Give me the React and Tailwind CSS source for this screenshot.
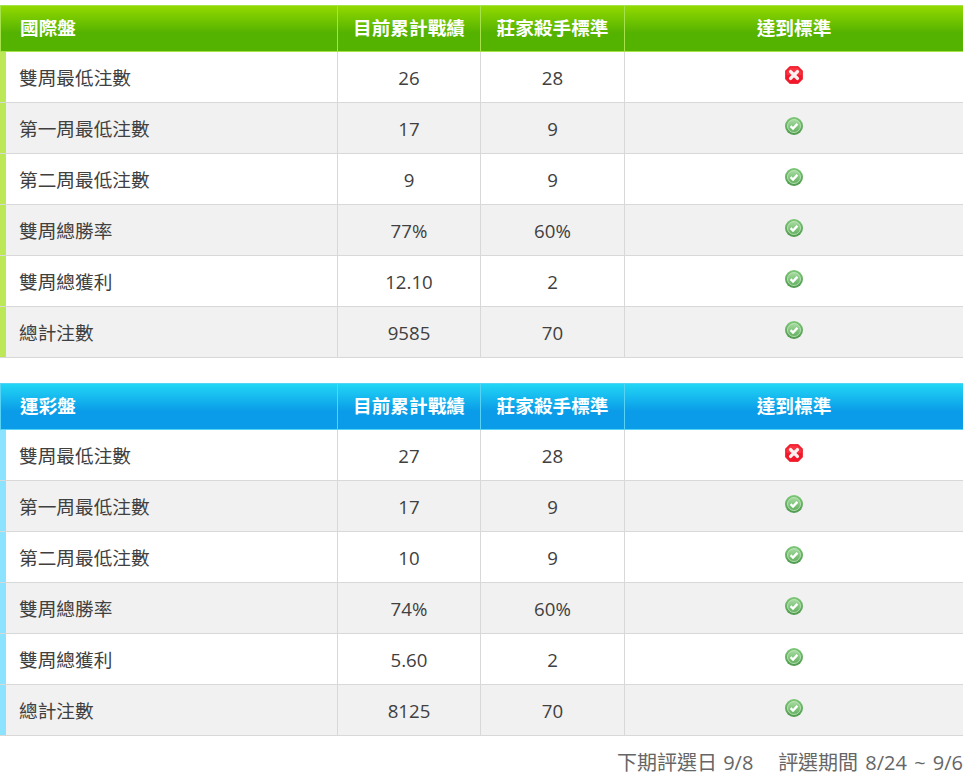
function Bad() {
  return (
    <svg width="18" height="18" viewBox="0 0 18 18" className="block">
      <path d="M5 0.3H13L17.7 5V13L13 17.7H5L0.3 13V5Z" fill="#f2172b" stroke="#e8101f" strokeWidth="0.6" strokeLinejoin="round" />
      <path d="M5.5 1.5H12.5L16.5 5.5V9H1.5V5.5Z" fill="#ff4a50" opacity="0.55" />
      <path d="M5.6 5.6L12.4 12.4M12.4 5.6L5.6 12.4" stroke="#fff0f0" strokeWidth="3.4" strokeLinecap="round" />
    </svg>
  );
}

function Good() {
  return (
    <svg width="18" height="18" viewBox="0 0 18 18" className="block">
      <defs>
        <linearGradient id="g1" x1="0" y1="0" x2="0" y2="1">
          <stop offset="0" stopColor="#7cc876" />
          <stop offset="1" stopColor="#4f9a4e" />
        </linearGradient>
        <linearGradient id="g2" x1="0" y1="0" x2="0" y2="1">
          <stop offset="0" stopColor="#a6dba0" />
          <stop offset="1" stopColor="#62b05f" />
        </linearGradient>
      </defs>
      <circle cx="9" cy="9" r="9" fill="url(#g1)" />
      <circle cx="9" cy="9" r="6.5" fill="url(#g2)" stroke="#c9e8c5" strokeWidth="0.8" />
      <path d="M5.6 9.2L8 11.5L12.4 6.9" fill="none" stroke="#ffffff" strokeWidth="2.4" />
    </svg>
  );
}

function Table({ title, headClass, headBorder, sideClass, rows, className }) {
  const cols = "grid grid-cols-[338px_143px_144px_338px] w-[963px]";
  return (
    <div className={className}>
      <div className={`${cols} h-[47px] border-t border-b text-white font-bold ${headClass} ${headBorder}`}>
        <div className={`flex items-center pl-[19px] pb-[1px] border-r border-l ${headBorder}`}>{title}</div>
        <div className={`flex items-center justify-center pb-[1px] border-r ${headBorder}`}>目前累計戰績</div>
        <div className={`flex items-center justify-center pb-[1px] border-r ${headBorder}`}>莊家殺手標準</div>
        <div className="flex items-center justify-center pb-[1px]">達到標準</div>
      </div>
      {rows.map((r, i) => (
        <div key={r[0]} className={`${cols} h-[51px] border-b border-[#d8d8d8] ${i % 2 ? "bg-[#f1f1f1]" : "bg-white"}`}>
          <div className={`flex items-center border-r border-[#d8d8d8] border-l-[6px] pl-[13px] pt-[2px] ${sideClass}`}>{r[0]}</div>
          <div className="flex items-center justify-center pt-[2px] border-r border-[#d8d8d8]">{r[1]}</div>
          <div className="flex items-center justify-center pt-[2px] border-r border-[#d8d8d8]">{r[2]}</div>
          <div className="flex items-center justify-center pb-[5px]">{r[3] ? <Good /> : <Bad />}</div>
        </div>
      ))}
    </div>
  );
}

export default function App() {
  const a = [
    ["雙周最低注數", "26", "28", false],
    ["第一周最低注數", "17", "9", true],
    ["第二周最低注數", "9", "9", true],
    ["雙周總勝率", "77%", "60%", true],
    ["雙周總獲利", "12.10", "2", true],
    ["總計注數", "9585", "70", true],
  ];
  const b = [
    ["雙周最低注數", "27", "28", false],
    ["第一周最低注數", "17", "9", true],
    ["第二周最低注數", "10", "9", true],
    ["雙周總勝率", "74%", "60%", true],
    ["雙周總獲利", "5.60", "2", true],
    ["總計注數", "8125", "70", true],
  ];
  return (
    <div className="w-[969px] h-[781px] bg-white pt-[5px] overflow-hidden text-[18.67px] leading-none text-[#404040] font-['Open_Sans','Noto_Sans_CJK_TC',sans-serif]">
      <Table
        title="國際盤"
        headClass="bg-[linear-gradient(#92d900_0%,#54b200_60%,#54b200_100%)]"
        headBorder="border-[#a6e34a]"
        sideClass="border-l-[#bce858]"
        rows={a}
      />
      <Table
        className="mt-[25px]"
        title="運彩盤"
        headClass="bg-[linear-gradient(#22d6f5_0%,#0a9ce8_60%,#0a9ce8_100%)]"
        headBorder="border-[#55d4f5]"
        sideClass="border-l-[#8be3ff]"
        rows={b}
      />
      <div className="w-[963px] mt-[17px] flex justify-end text-[20px] text-[#666666] whitespace-pre">
        <span className="[word-spacing:1px]">下期評選日 9/8    </span>
        <span className="[word-spacing:2px]">評選期間 8/24 ~ 9/6</span>
      </div>
    </div>
  );
}
